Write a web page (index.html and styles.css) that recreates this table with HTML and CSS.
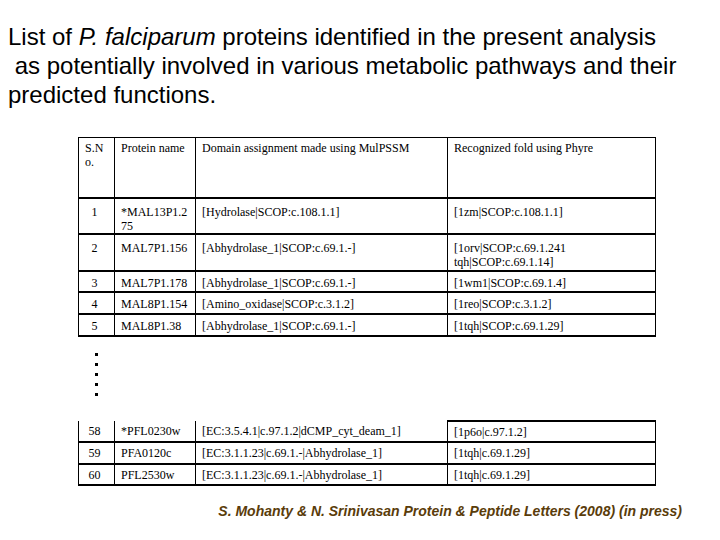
FILE: index.html
```html
<!DOCTYPE html>
<html>
<head>
<meta charset="utf-8">
<link rel="stylesheet" href="styles.css">
</head>
<body>
<div class="slide">
  <h1 class="title">List of <i>P. falciparum</i> proteins identified in the present analysis<br>&nbsp;as potentially involved in various metabolic pathways and their<br>predicted functions.</h1>

  <table class="grid top">
    <colgroup><col class="c1"><col class="c2"><col class="c3"><col class="c4"></colgroup>
    <tr class="r-head"><td class="left">S.N<br>o.</td><td>Protein name</td><td>Domain assignment made using MulPSSM</td><td>Recognized fold using Phyre</td></tr>
    <tr class="r-tall r-one"><td>1</td><td>*MAL13P1.2<br>75</td><td>[Hydrolase|SCOP:c.108.1.1]</td><td>[1zm|SCOP:c.108.1.1]</td></tr>
    <tr class="r-tall"><td>2</td><td>MAL7P1.156</td><td>[Abhydrolase_1|SCOP:c.69.1.-]</td><td>[1orv|SCOP:c.69.1.241<br>tqh|SCOP:c.69.1.14]</td></tr>
    <tr class="r-short r-thin"><td>3</td><td>MAL7P1.178</td><td>[Abhydrolase_1|SCOP:c.69.1.-]</td><td>[1wm1|SCOP:c.69.1.4]</td></tr>
    <tr class="r-short"><td>4</td><td>MAL8P1.154</td><td>[Amino_oxidase|SCOP:c.3.1.2]</td><td>[1reo|SCOP:c.3.1.2]</td></tr>
    <tr class="r-short"><td>5</td><td>MAL8P1.38</td><td>[Abhydrolase_1|SCOP:c.69.1.-]</td><td>[1tqh|SCOP:c.69.1.29]</td></tr>
  </table>

  <div class="dots"><span></span><span></span><span></span><span></span><span></span></div>

  <table class="grid bottom">
    <colgroup><col class="c1"><col class="c2"><col class="c3"><col class="c4"></colgroup>
    <tr class="r-short r-thin first"><td>58</td><td>*PFL0230w</td><td>[EC:3.5.4.1|c.97.1.2|dCMP_cyt_deam_1]</td><td class="topline">[1p6o|c.97.1.2]</td></tr>
    <tr class="r-short"><td>59</td><td>PFA0120c</td><td>[EC:3.1.1.23|c.69.1.-|Abhydrolase_1]</td><td>[1tqh|c.69.1.29]</td></tr>
    <tr class="r-short r-thin"><td>60</td><td>PFL2530w</td><td>[EC:3.1.1.23|c.69.1.-|Abhydrolase_1]</td><td>[1tqh|c.69.1.29]</td></tr>
  </table>

  <p class="cite">S. Mohanty &amp; N. Srinivasan Protein &amp; Peptide Letters (2008) (in press)</p>
</div>
</body>
</html>
```

FILE: styles.css
```css
html, body {
  margin: 0;
  padding: 0;
  background: #ffffff;
}

.slide {
  width: 720px;
  height: 540px;
  display: flex;
  flex-direction: column;
  box-sizing: border-box;
  padding-top: 22px;
}

.title {
  margin: 0 0 0 8px;
  font-family: "Liberation Sans", Arial, sans-serif;
  font-weight: normal;
  font-size: 24px;
  line-height: 29px;
  color: #000000;
}

.grid {
  margin-left: 78px;
  width: 577px;
  border-collapse: collapse;
  table-layout: fixed;
  font-family: "Liberation Serif", "Times New Roman", serif;
  font-size: 12px;
  line-height: 14px;
  color: #000000;
}

.top {
  margin-top: 28px;
}

.c1 { width: 36px; }
.c2 { width: 81px; }
.c3 { width: 252px; }
.c4 { width: 208px; }

.grid td {
  border-left: 1px solid #000;
  border-right: 1px solid #000;
  border-top: 2px solid #000;
  border-bottom: 2px solid #000;
  padding: 6px 6px 0 6px;
  vertical-align: top;
  white-space: nowrap;
}

.grid td:first-child {
  text-align: center;
  padding-left: 1px;
  padding-right: 5px;
}

.grid td.left {
  text-align: left;
  padding-left: 6px;
}

.top .r-head td {
  border-top: 1px solid #000;
  padding-top: 3px;
}

.r-head { height: 60px; }
.r-tall { height: 37px; }
.r-one { height: 36px; }
.r-short { height: 22px; }
.r-thin { height: 21px; }

.top .r-short td {
  padding-top: 4px;
}

.bottom .r-short td {
  padding-top: 3px;
}

.bottom {
  margin-top: 24px;
}

.bottom .first td {
  border-top: none;
}

.bottom .first td.topline {
  border-top: 2px solid #000;
}

.dots {
  margin: 16px 0 0 95px;
  display: flex;
  flex-direction: column;
  gap: 7px;
}

.dots span {
  display: block;
  width: 3px;
  height: 3px;
  background: #000;
}

.cite {
  margin: 17px 38px 0 0;
  text-align: right;
  font-family: "Liberation Sans", Arial, sans-serif;
  font-size: 14px;
  font-weight: bold;
  font-style: italic;
  color: #5a3c0a;
}
```
